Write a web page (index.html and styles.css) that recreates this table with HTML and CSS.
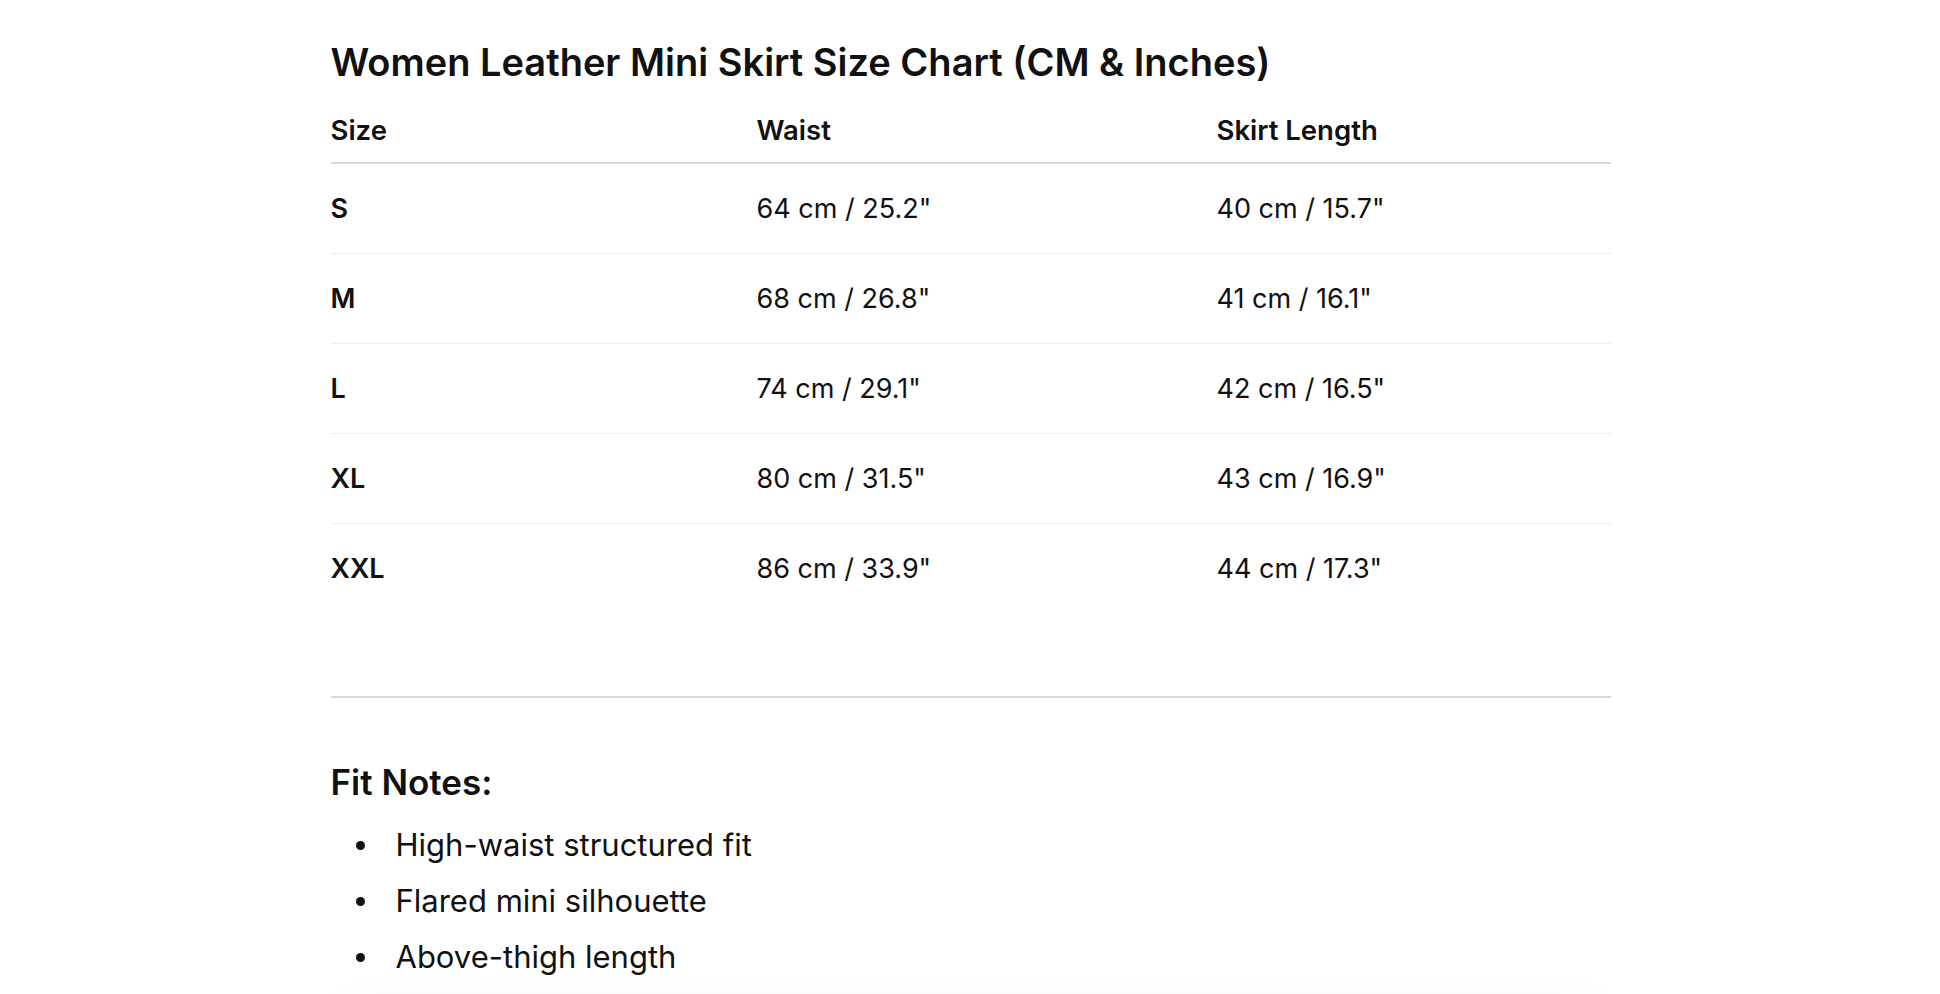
FILE: index.html
```html
<!DOCTYPE html>
<html lang="en">
<head>
<meta charset="utf-8">
<title>Women Leather Mini Skirt Size Chart</title>
<link rel="stylesheet" href="styles.css">
</head>
<body>
<main class="wrap">
  <h2 class="title">Women Leather Mini Skirt Size Chart (CM &amp; Inches)</h2>
  <table class="chart">
    <colgroup>
      <col class="c1"><col class="c2"><col class="c3">
    </colgroup>
    <thead>
      <tr><th>Size</th><th>Waist</th><th>Skirt Length</th></tr>
    </thead>
    <tbody>
      <tr><td class="size">S</td><td>64 cm / 25.2"</td><td>40 cm / 15.7"</td></tr>
      <tr><td class="size">M</td><td>68 cm / 26.8"</td><td>41 cm / 16.1"</td></tr>
      <tr><td class="size">L</td><td>74 cm / 29.1"</td><td>42 cm / 16.5"</td></tr>
      <tr><td class="size">XL</td><td>80 cm / 31.5"</td><td>43 cm / 16.9"</td></tr>
      <tr><td class="size">XXL</td><td>86 cm / 33.9"</td><td>44 cm / 17.3"</td></tr>
    </tbody>
  </table>
  <hr class="divider">
  <h3 class="notes-title">Fit Notes:</h3>
  <ul class="notes">
    <li>High-waist structured fit</li>
    <li>Flared mini silhouette</li>
    <li>Above-thigh length</li>
  </ul>
  <div class="next-card"></div>
</main>
</body>
</html>
```
FILE: styles.css
```css
html, body {
  margin: 0;
  padding: 0;
  background: #ffffff;
}
body {
  font-family: Inter, "Noto Sans", "Liberation Sans", sans-serif;
  color: #111111;
}
.wrap {
  max-width: 1280px;
  margin: 0 auto;
  padding: 41px 0 0 1px;
}
.title {
  margin: 0 0 12px;
  font-size: 38px;
  line-height: 43px;
  font-weight: 600;
}
.chart {
  width: 100%;
  border-collapse: collapse;
  table-layout: fixed;
}
.c1 { width: 426px; }
.c2 { width: 460px; }
.c3 { width: 394px; }
.chart th {
  text-align: left;
  font-size: 27.5px;
  line-height: 33px;
  font-weight: 600;
  padding: 18px 0 15px;
  border-bottom: 2px solid #d9d9d9;
}
.chart td {
  height: 89px;
  padding: 0;
  font-size: 27px;
  font-weight: 400;
  vertical-align: middle;
  border-bottom: 1px solid #eeeeee;
}
.chart tbody tr:last-child td {
  border-bottom: none;
}
.chart td.size {
  font-weight: 600;
}
.divider {
  margin: 83px 0 0;
  border: none;
  border-top: 2px solid #d9d9d9;
}
.notes-title {
  margin: 63px 0 0;
  font-size: 35px;
  line-height: 43px;
  font-weight: 600;
}
.notes {
  list-style: none;
  margin: 13px 0 0;
  padding-left: 25px;
  font-size: 31px;
  line-height: 56px;
}
.notes li {
  display: flex;
  align-items: center;
  gap: 31px;
}
.notes li::before {
  content: "";
  flex: none;
  width: 9px;
  height: 9px;
  border-radius: 50%;
  background: #111111;
}
.next-card {
  height: 200px;
  margin: 20px 0 0;
  border-radius: 40px;
  box-shadow: 0 -6px 40px rgba(0, 0, 0, 0.03);
}
```
